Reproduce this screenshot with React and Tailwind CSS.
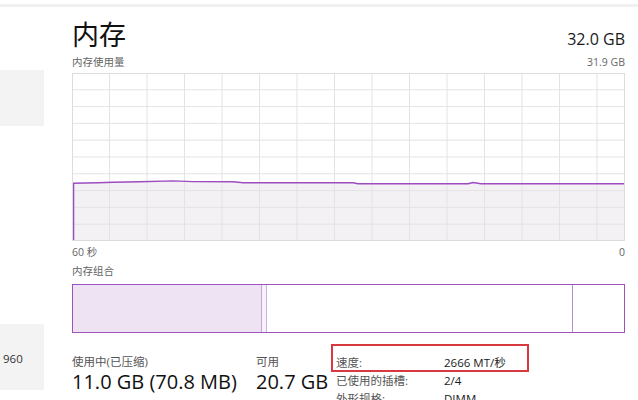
import React from 'react';

const font = { fontFamily: '"Open Sans", "Noto Sans CJK SC", sans-serif' };

const linePts = [
  [0, 109.3], [25, 108.8], [40, 108.3], [67, 107.7], [100, 106.9], [120, 107.6],
  [160, 107.7], [170, 108.7], [280, 108.7], [285, 109.7], [395, 109.7], [400, 108.5],
  [408, 109.7], [551, 109.7],
];

const UsageChart = () => {
  const line = linePts.map(([x, y], i) => `${i ? 'L' : 'M'}${x},${y}`).join(' ');
  const fill = `${line} L551,166 L0,166 Z`;
  const cols = Array.from({ length: 14 }, (_, i) => 37.5 * (i + 1) - 1);
  const rows = Array.from({ length: 9 }, (_, i) => 16.8 * (i + 1) - 1);
  return (
    <div className="h-[168px] border border-[#dcdcdc] bg-white">
      <svg className="block w-full h-full" viewBox="0 0 551 166" preserveAspectRatio="none">
        <path d={fill} fill="#f3f1f4" />
        {cols.map((x) => (
          <line key={`c${x}`} x1={x} y1="0" x2={x} y2="166" stroke="#e3e3e3" strokeWidth="1" />
        ))}
        {rows.map((y) => (
          <line key={`r${y}`} x1="0" y1={y} x2="551" y2={y} stroke="#e3e3e3" strokeWidth="1" />
        ))}
        <path d={line} fill="none" stroke="#9d4dc0" strokeWidth="1.4" />
        <line x1="0.6" y1="109.3" x2="0.6" y2="166" stroke="#9d4dc0" strokeWidth="1.4" />
      </svg>
    </div>
  );
};

const CompositionBar = () => (
  <div className="flex h-[49px] border-[1.5px] border-[#9d52bf] bg-white">
    <div className="w-[189px] bg-[#eee3f3] border-r border-[#c7a3d8]" />
    <div className="w-[4px] bg-[#f7f1fa]" />
    <div className="w-[306px] border-l border-[#cdb0dc]" />
    <div className="flex-1 border-l border-[#b98bd0]" />
  </div>
);

const InfoRow = ({ label, value }) => (
  <div className="flex h-[18px] items-center text-[11.5px]">
    <span className="w-[108px] text-[#555]">{label}</span>
    <span className="text-[#1a1a1a]">{value}</span>
  </div>
);

export default function App() {
  return (
    <div className="w-[638px] h-[400px] overflow-hidden bg-white" style={font}>
      <div className="h-[4px]" />
      <div className="h-[3px] bg-[#f0f0f0]" />
      <div className="flex">
        <aside className="w-[44px] shrink-0">
          <div className="mt-[63px] h-[56px] bg-[#f3f3f3]" />
          <div className="mt-[198px] h-[66px] bg-[#f3f3f3] flex items-center pl-[3px] pt-[3px] text-[11.5px] text-[#333]">
            960
          </div>
        </aside>
        <main className="ml-[28px] w-[553px]">
          <div className="mt-[10px] flex items-baseline justify-between">
            <h1 className="text-[27px] leading-[36px] text-[#111]">内存</h1>
            <span className="text-[16px] text-[#1a1a1a]">32.0 GB</span>
          </div>
          <div className="mt-[3px] flex h-[14px] items-center justify-between text-[10.5px] text-[#666]">
            <span>内存使用量</span>
            <span>31.9 GB</span>
          </div>
          <div className="mt-[3px]">
            <UsageChart />
          </div>
          <div className="mt-[5px] flex h-[14px] items-center justify-between text-[10.5px] text-[#666]">
            <span>60 秒</span>
            <span>0</span>
          </div>
          <div className="mt-[5px] flex h-[14px] items-center text-[10.5px] text-[#666]">
            <span>内存组合</span>
          </div>
          <div className="mt-[5px]">
            <CompositionBar />
          </div>
          <div className="mt-[11px] flex">
            <div className="w-[184px] pt-[10px]">
              <div className="h-[16px] leading-[16px] text-[11.5px] text-[#555]">使用中(已压缩)</div>
              <div className="h-[24px] leading-[24px] text-[20px] text-[#111] whitespace-nowrap">11.0 GB (70.8 MB)</div>
            </div>
            <div className="w-[75px] pt-[10px]">
              <div className="h-[16px] leading-[16px] text-[11.5px] text-[#555]">可用</div>
              <div className="h-[24px] leading-[24px] text-[20px] text-[#111] whitespace-nowrap">20.7 GB</div>
            </div>
            <div>
              <div className="w-[198px] h-[28px] border-2 border-[#d8393f] pl-[3px] pt-[8px]">
                <InfoRow label="速度:" value="2666 MT/秒" />
              </div>
              <div className="pl-[5px]">
                <InfoRow label="已使用的插槽:" value="2/4" />
                <InfoRow label="外形规格:" value="DIMM" />
              </div>
            </div>
          </div>
        </main>
      </div>
    </div>
  );
}
